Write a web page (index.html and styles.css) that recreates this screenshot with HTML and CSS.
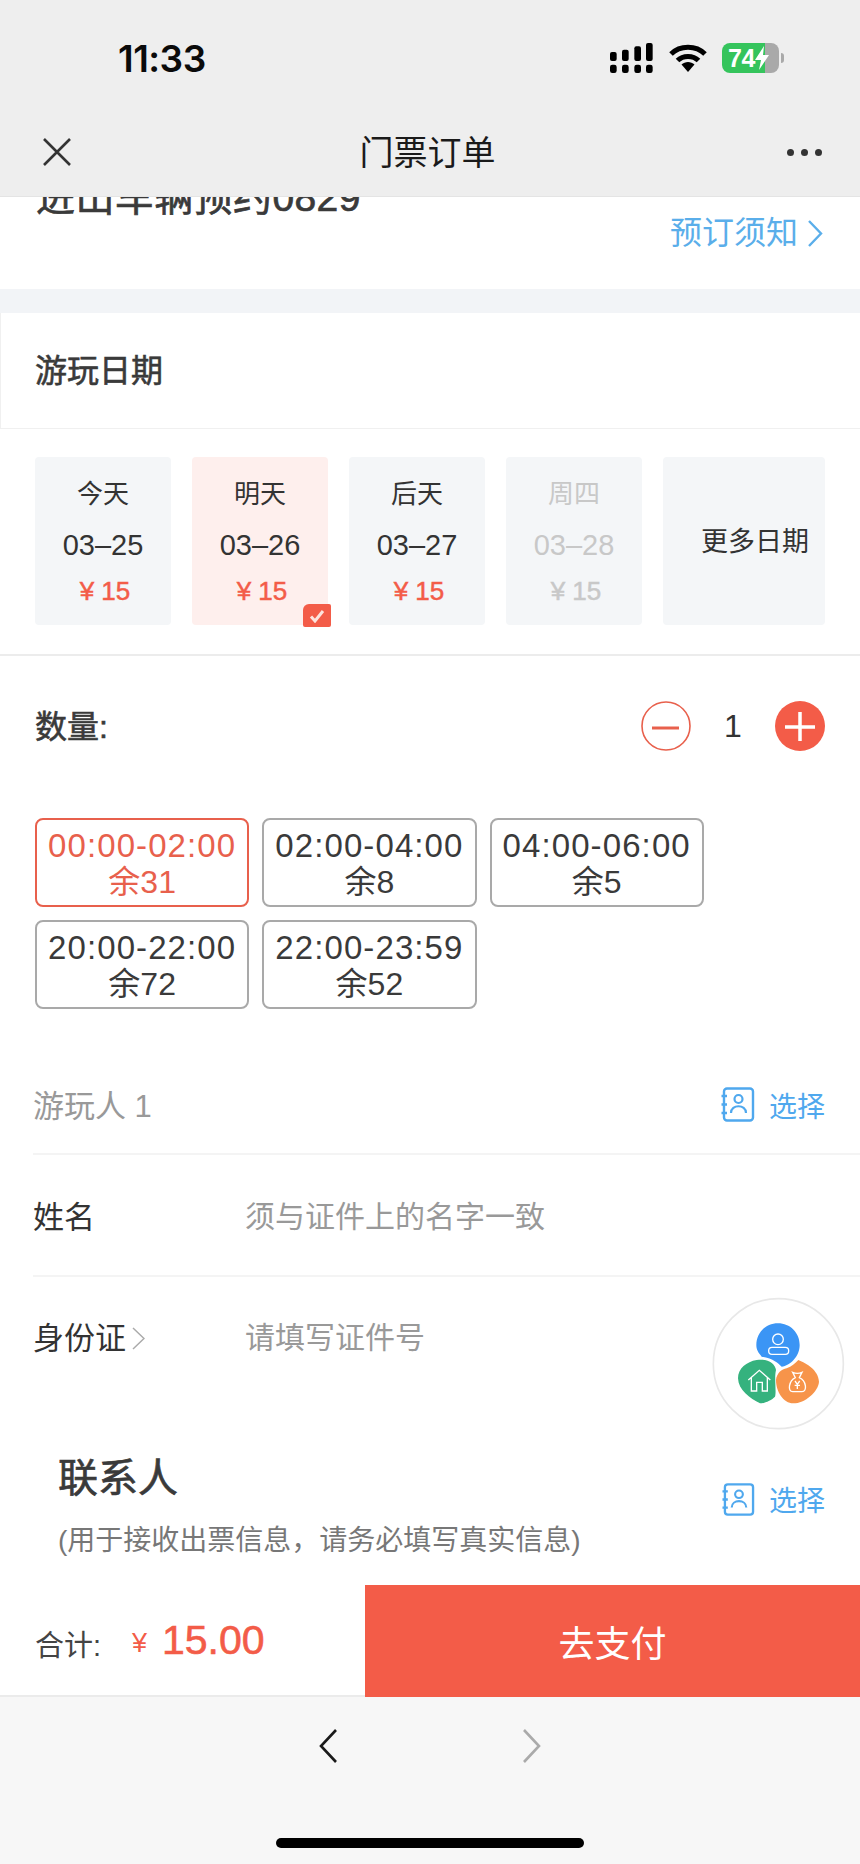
FILE: index.html
```html
<!doctype html>
<html>
<head>
<meta charset="utf-8">
<title>门票订单</title>
<link rel="stylesheet" href="styles.css">
</head>
<body>
<div class="page">
	<!-- 顶部状态栏 + 导航 -->
	<div class="top">
		<div class="status">
			<span class="clock">11:33</span>
			<div class="status-icons">
				<svg class="signal" width="44" height="30" viewBox="0 0 132 90">
					<rect x="0" y="27" width="20" height="27" rx="6"/>
					<rect x="36" y="20" width="20" height="34" rx="6"/>
					<rect x="73" y="10" width="20" height="44" rx="6"/>
					<rect x="108" y="0" width="20" height="54" rx="6"/>
					<rect x="0" y="65" width="20" height="25" rx="7"/>
					<rect x="36" y="65" width="20" height="25" rx="7"/>
					<rect x="73" y="65" width="20" height="25" rx="7"/>
					<rect x="108" y="65" width="20" height="25" rx="7"/>
				</svg>
				<svg class="wifi" width="38" height="28" viewBox="0 0 38 28">
					<path d="M2 10 C11 1 27 1 36 10" fill="none" stroke="#000" stroke-width="5"/>
					<path d="M8.5 16.5 C14 11 24 11 29.5 16.5" fill="none" stroke="#000" stroke-width="5"/>
					<path d="M12.5 20.5 C16 17 22 17 25.500 20.500 L19 28 Z"/>
				</svg>
				<div class="battery">
					<span class="battery-num">74</span>
					<svg class="bolt" width="16" height="24" viewBox="0 0 16 24"><path d="M10 0 L1 14 H7 L5 24 L15 9 H9 Z" fill="#fff"/></svg>
				</div>
			</div>
		</div>
		<div class="nav">
			<svg class="nav-close" width="28" height="28" viewBox="0 0 28 28"><path d="M1 1 L27 27 M27 1 L1 27" stroke="#333" stroke-width="2.600" fill="none"/></svg>
			<div class="nav-title">门票订单</div>
			<div class="nav-more"><i></i><i></i><i></i></div>
		</div>
	</div>

	<!-- 门票名称 -->
	<div class="ticket">
		<div class="ticket-name">进山车辆预约0829</div>
		<div class="notice">预订须知
			<svg width="16" height="27" viewBox="0 0 16 27"><path d="M2 1 L14 13.500 L2 26" fill="none" stroke="#5aaeea" stroke-width="2.400"/></svg>
		</div>
	</div>
	<div class="gap"></div>

	<div class="date-head"><span>游玩日期</span></div>
	<div class="dates">
		<div class="date-card">
			<span class="d-name">今天</span>
			<span class="d-day">03–25</span>
			<span class="d-price">¥ 15</span>
		</div>
		<div class="date-card on">
			<span class="d-name">明天</span>
			<span class="d-day">03–26</span>
			<span class="d-price">¥ 15</span>
			<div class="tick">
				<svg width="16" height="14" viewBox="0 0 16 14"><path d="M2 7.500 L6 12 L14 2" fill="none" stroke="#fde3dd" stroke-width="3"/></svg>
			</div>
		</div>
		<div class="date-card">
			<span class="d-name">后天</span>
			<span class="d-day">03–27</span>
			<span class="d-price">¥ 15</span>
		</div>
		<div class="date-card off">
			<span class="d-name">周四</span>
			<span class="d-day">03–28</span>
			<span class="d-price">¥ 15</span>
		</div>
		<div class="date-more">更多日期</div>
	</div>

	<div class="qty">
		<span class="qty-label">数量:</span>
		<div class="stepper">
			<svg width="50" height="50" viewBox="0 0 50 50"><circle cx="25" cy="25" r="24" fill="#fff" stroke="#e8604c" stroke-width="1.600"/><path d="M11 27 H38" stroke="#e8604c" stroke-width="3"/></svg>
			<span class="qty-num">1</span>
			<svg width="50" height="50" viewBox="0 0 50 50"><circle cx="25" cy="25" r="25" fill="#f35c48"/><path d="M10 26 H40 M25 11 V40" stroke="#fff" stroke-width="3.500"/></svg>
		</div>
	</div>

	<!-- 时段 -->
	<div class="slots">
		<div class="slot on"><div>00:00-02:00</div><div>余31</div></div>
		<div class="slot"><div>02:00-04:00</div><div>余8</div></div>
		<div class="slot"><div>04:00-06:00</div><div>余5</div></div>
		<div class="slot"><div>20:00-22:00</div><div>余72</div></div>
		<div class="slot"><div>22:00-23:59</div><div>余52</div></div>
	</div>

	<div class="row visitor">
		<span class="visitor-name">游玩人 1</span>
		<div class="pick">
			<svg width="34" height="35" viewBox="0 0 34 35">
				<rect x="3" y="1.500" width="29" height="32" rx="3" fill="none" stroke="#4fa8ee" stroke-width="2.400"/>
				<path d="M0.500 9 H6 M0.500 17.500 H6 M0.500 26 H6" stroke="#4fa8ee" stroke-width="2.400"/>
				<circle cx="17.500" cy="12" r="4" fill="none" stroke="#4fa8ee" stroke-width="2.200"/>
				<path d="M10 26 C10 17 25 17 25 26" fill="none" stroke="#4fa8ee" stroke-width="2.200"/>
			</svg>
			<span>选择</span>
		</div>
	</div>
	<div class="row field">
		<span class="f-label">姓名</span>
		<span class="f-hint">须与证件上的名字一致</span>
	</div>
	<div class="row field last">
		<span class="f-label">身份证<svg class="f-arrow" width="13" height="23" viewBox="0 0 13 23"><path d="M1 1 L12 11.500 L1 22" fill="none" stroke="#aaa" stroke-width="1.500"/></svg></span>
		<span class="f-hint">请填写证件号</span>
	</div>

	<div class="contact">
		<div class="contact-text">
			<div class="contact-title">联系人</div>
			<div class="contact-sub">(用于接收出票信息，请务必填写真实信息)</div>
		</div>
		<div class="pick">
			<svg width="33" height="33" viewBox="0 0 34 35" preserveAspectRatio="none">
				<rect x="3" y="1.500" width="29" height="32" rx="3" fill="none" stroke="#4fa8ee" stroke-width="2.400"/>
				<path d="M0.500 9 H6 M0.500 17.500 H6 M0.500 26 H6" stroke="#4fa8ee" stroke-width="2.400"/>
				<circle cx="17.500" cy="12" r="4" fill="none" stroke="#4fa8ee" stroke-width="2.200"/>
				<path d="M10 26 C10 17 25 17 25 26" fill="none" stroke="#4fa8ee" stroke-width="2.200"/>
			</svg>
			<span>选择</span>
		</div>
	</div>

	<!-- 合计 -->
	<div class="paybar">
		<div class="total">
			<span class="total-label">合计:</span>
			<span class="total-cur">¥</span>
			<span class="total-num">15.00</span>
		</div>
		<div class="pay-btn">去支付</div>
	</div>

	<!-- 浏览器底栏 -->
	<div class="browser">
		<div class="browser-arrows">
			<svg width="18" height="34" viewBox="0 0 18 34"><path d="M17 1 L2 17 L17 33" fill="none" stroke="#1a1a1a" stroke-width="2.600"/></svg>
			<svg width="18" height="34" viewBox="0 0 18 34"><path d="M1 1 L16 17 L1 33" fill="none" stroke="#aaa" stroke-width="2.600"/></svg>
		</div>
		<div class="home-bar"></div>
	</div>

	<!-- 悬浮球 -->
	<svg class="fab" width="140" height="140" viewBox="0 0 420 420">
		<circle cx="205" cy="206" r="195" fill="#fff" stroke="#e8e8e8" stroke-width="5"/>
		<path d="M204 85 C240 85 269 113 269 150 C269 185 240 212 215 215 C205 205 190 190 155 185 C145 172 139 165 139 150 C139 113 168 85 204 85 Z" fill="#3b95f5"/>
		<path d="M140 195 C175 190 195 205 198 225 C192 250 200 290 195 305 C185 315 165 325 150 325 C120 310 85 285 84 250 C84 220 110 200 140 195 Z" fill="#35b27e"/>
		<path d="M265 195 C290 205 325 225 327 260 C325 290 285 325 250 325 C220 325 198 290 198 255 C200 235 215 222 230 220 C245 215 255 205 265 195 Z" fill="#f7944a"/>
		<g fill="none" stroke="#fff" stroke-width="4">
			<circle cx="204" cy="133" r="16"/>
			<rect x="176" y="157" width="60" height="21" rx="10"/>
			<path d="M115 255 L148 226 L181 255 M124 248 V288 H140 V262 H157 V288 H172 V248"/>
			<path d="M248 232 Q262 238 276 232 L268 248 C290 258 292 290 276 290 H248 C232 290 236 258 256 248 Z"/>
			<path d="M255 258 L262 268 L269 258 M262 268 V282 M254 271 H270"/>
		</g>
	</svg>
</div>
</body>
</html>
```

FILE: styles.css
```css
* {
	box-sizing: border-box;
}
body {
	margin: 0;
	background: #fff;
	font-family: "Liberation Sans", "Noto Sans CJK SC", sans-serif;
	color: #333;
}
.page {
	position: relative;
	width: 860px;
	height: 1864px;
	overflow: hidden;
	display: flex;
	flex-direction: column;
}

/* 顶部 */
.top {
	flex: none;
	height: 196px;
	background: #eeeeee;
}
.status {
	height: 118px;
	padding: 0 81px 0 118px;
	display: flex;
	align-items: center;
	justify-content: space-between;
}
.clock {
	margin-top: -2px;
	font-family: Inter, "Liberation Sans", sans-serif;
	font-size: 37px;
	font-weight: 600;
	letter-spacing: -0.5px;
	color: #0a0a0a;
}
.status-icons {
	margin-top: -2px;
	display: flex;
	align-items: center;
}
.signal {
	margin-right: 15px;
}
.wifi {
	margin-right: 15px;
}
.battery {
	position: relative;
	width: 57px;
	height: 30px;
	border-radius: 8px;
	background: linear-gradient(to right, #35c45c 75%, #a9a9a9 75%);
	display: flex;
	align-items: center;
	padding-left: 6px;
}
.battery::after {
	content: "";
	position: absolute;
	right: -5px;
	top: 10px;
	width: 3px;
	height: 10px;
	border-radius: 0 3px 3px 0;
	background: #a9a9a9;
}
.battery-num {
	font-size: 25px;
	font-weight: 700;
	color: #fff;
	letter-spacing: -0.5px;
}
.bolt {
	margin-left: -1px;
}
.nav {
	height: 68px;
	padding: 0 38px 0 43px;
	display: grid;
	grid-template-columns: 1fr auto 1fr;
	align-items: center;
}
.nav-title {
	padding: 0 10px 4px 0;
	font-size: 34px;
	color: #1a1a1a;
}
.nav-more {
	justify-self: end;
	display: flex;
	gap: 7px;
}
.nav-more i {
	width: 7px;
	height: 7px;
	border-radius: 50%;
	background: #333;
}

/* 门票名称 */
.ticket {
	flex: none;
	height: 93px;
	overflow: hidden;
	padding: 0 37px 0 36px;
	background: #fff;
	border-top: 1px solid #e4e4e4;
}
.ticket-name {
	margin-top: -21px;
	font-size: 39px;
	line-height: 44px;
	letter-spacing: 0.4px;
	-webkit-text-stroke: 0.7px #3a3a3a;
	color: #3a3a3a;
}
.notice {
	margin-top: -7px;
	display: flex;
	align-items: center;
	justify-content: flex-end;
	gap: 9px;
	font-size: 32px;
	line-height: 40px;
	color: #5aaeea;
}
.gap {
	flex: none;
	height: 24px;
	background: #f2f4f7;
}
.date-head {
	flex: none;
	height: 116px;
	padding: 0 0 6px 34px;
	border-left: 1px solid #f0f0f0;
	border-bottom: 1px solid #f0f0f0;
	display: flex;
	align-items: center;
	font-size: 32px;
	-webkit-text-stroke: 0.6px #3a3a3a;
	color: #3a3a3a;
}

/* 日期 */
.dates {
	flex: none;
	height: 227px;
	padding: 28px 35px 0 35px;
	border-bottom: 2px solid #ececec;
	display: flex;
	gap: 21px;
}
.date-card {
	position: relative;
	width: 136px;
	height: 168px;
	padding-top: 14px;
	border-radius: 4px;
	background: #f4f6f8;
	display: flex;
	flex-direction: column;
	align-items: center;
	color: #333;
}
.date-card.on {
	background: #feefed;
}
.date-card.off {
	color: #c8c8c8;
}
.d-name {
	font-size: 26px;
	line-height: 46px;
}
.d-day {
	font-size: 29px;
	line-height: 56px;
}
.d-price {
	padding-left: 4px;
	font-size: 26px;
	line-height: 36px;
	-webkit-text-stroke: 0.5px #f35c48;
	color: #f35c48;
}
.off .d-price {
	-webkit-text-stroke: 0.5px #c8c8c8;
	color: #c8c8c8;
}
.tick {
	position: absolute;
	right: -3px;
	bottom: -2px;
	width: 28px;
	height: 23px;
	border-radius: 6px 2px 2px 2px;
	background: #f35c48;
	display: flex;
	align-items: center;
	justify-content: center;
}
.date-more {
	flex: 1;
	height: 168px;
	padding: 0 0 4px 38px;
	border-radius: 4px;
	background: #f4f6f8;
	display: flex;
	align-items: center;
	font-size: 27px;
}

/* 数量 */
.qty {
	flex: none;
	margin-top: 45px;
	padding: 0 35px 0 35px;
	height: 50px;
	display: flex;
	align-items: center;
	justify-content: space-between;
}
.qty-label {
	padding-bottom: 4px;
	font-size: 32px;
	-webkit-text-stroke: 0.6px #3a3a3a;
	color: #3a3a3a;
}
.stepper {
	display: flex;
	align-items: center;
}
.qty-num {
	width: 84px;
	text-align: center;
	font-size: 32px;
}

/* 时段 */
.slots {
	flex: none;
	margin-top: 67px;
	padding-left: 35px;
	display: flex;
	flex-wrap: wrap;
	gap: 13px 13px;
}
.slot {
	height: 89px;
	padding: 7px 11px 0;
	border: 2px solid #a9a9a9;
	border-radius: 8px;
	text-align: center;
	font-size: 33px;
	line-height: 37px;
	letter-spacing: 1.1px;
	color: #3a3a3a;
}
.slot div + div {
	font-size: 32px;
	letter-spacing: 0;
}
.slot.on {
	border-color: #e8604c;
	color: #e8604c;
}

/* 游玩人 */
.row {
	flex: none;
	display: flex;
	align-items: center;
}
.visitor {
	margin-top: 47px;
	margin-left: 33px;
	height: 99px;
	padding-right: 35px;
	justify-content: space-between;
	border-bottom: 2px solid #f4f4f4;
}
.visitor-name {
	padding-bottom: 2px;
	font-size: 31px;
	color: #999;
}
.pick {
	display: flex;
	align-items: center;
	gap: 14px;
	font-size: 28px;
	color: #4fa8ee;
}
.field {
	margin-left: 33px;
	height: 122px;
	font-size: 30px;
	border-bottom: 2px solid #f4f4f4;
}
.field.last {
	border-bottom: none;
}
.f-label {
	width: 212px;
	padding-bottom: 2px;
	display: flex;
	align-items: center;
	font-size: 31px;
	color: #333;
}
.f-arrow {
	margin: 6px 0 0 6px;
}
.f-hint {
	padding-bottom: 2px;
	color: #999;
}
.field.last .f-label,
.field.last .f-hint {
	padding-bottom: 6px;
}

/* 联系人 */
.contact {
	flex: 1;
	padding: 54px 35px 0 58px;
	display: flex;
	align-items: flex-start;
	justify-content: space-between;
}
.contact-title {
	font-size: 40px;
	line-height: 50px;
	-webkit-text-stroke: 0.7px #3a3a3a;
	color: #3a3a3a;
}
.contact-sub {
	margin-top: 20px;
	font-size: 28px;
	line-height: 36px;
	color: #777;
}
.contact .pick {
	margin-top: 26px;
}

/* 合计 */
.paybar {
	flex: none;
	height: 112px;
	display: flex;
	border-bottom: 2px solid #ebebeb;
}
.total {
	flex: 1;
	padding-left: 35px;
	display: flex;
	align-items: center;
}
.total-label {
	width: 97px;
	padding-top: 6px;
	font-size: 29px;
	color: #444;
}
.total-cur {
	width: 30px;
	padding-top: 6px;
	font-size: 27px;
	color: #f35c48;
}
.total-num {
	font-size: 41px;
	color: #f35c48;
	-webkit-text-stroke: 0.6px #f35c48;
}
.pay-btn {
	flex: none;
	width: 495px;
	margin-bottom: -2px;
	background: #f35c48;
	display: flex;
	align-items: center;
	justify-content: center;
	font-size: 36px;
	color: #fff;
}

/* 浏览器底栏 */
.browser {
	flex: none;
	height: 167px;
	padding-top: 32px;
	background: #f7f7f7;
	display: flex;
	flex-direction: column;
	align-items: center;
}
.browser-arrows {
	display: flex;
	gap: 186px;
}
.home-bar {
	margin-top: 75px;
	width: 308px;
	height: 10px;
	border-radius: 5px;
	background: #000;
}
.fab {
	position: absolute;
	left: 710px;
	top: 1295px;
}
```
